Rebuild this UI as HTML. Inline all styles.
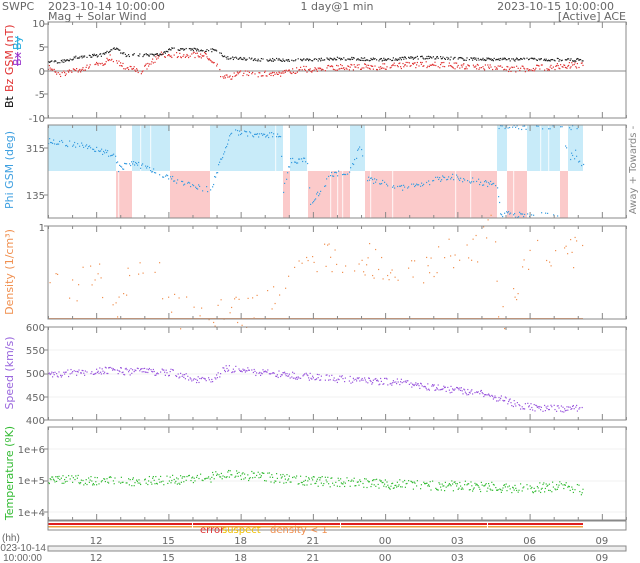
<!DOCTYPE html>
<html><head><meta charset="utf-8"><style>
html,body{margin:0;padding:0;background:#fff;width:640px;height:563px;overflow:hidden}
svg{display:block;font-family:"DejaVu Sans","Liberation Sans",sans-serif}
</style></head><body>
<svg id="s" width="640" height="563" xmlns="http://www.w3.org/2000/svg">
<g font-size="11" fill="#666">
<text x="2" y="10">SWPC</text>
<text x="48" y="10">2023-10-14 10:00:00</text>
<text x="337" y="10" text-anchor="middle">1 day@1 min</text>
<text x="614" y="10" text-anchor="end">2023-10-15 10:00:00</text>
<text x="48" y="20">Mag + Solar Wind</text>
<text x="626" y="20" text-anchor="end">[Active] ACE</text>
</g>
<g id="bg"></g>
<g id="grid"></g>
<g id="pts"></g>
<g id="ax" fill="none" stroke="#888" stroke-width="1"></g>
<g font-size="10" fill="#666" text-anchor="end">
<text x="45" y="27">10</text><text x="45" y="51">5</text><text x="45" y="75">0</text><text x="45" y="98">-5</text><text x="45" y="122">-10</text>
<text x="45" y="152">315</text><text x="45" y="199">135</text>
<text x="45" y="231">1</text>
<text x="45" y="331">600</text><text x="45" y="354">550</text><text x="45" y="377">500</text><text x="45" y="401">450</text><text x="45" y="424">400</text>
<text x="45" y="453">1e+6</text><text x="45" y="484">1e+5</text><text x="45" y="516">1e+4</text>
</g>
<g font-size="11">
<text transform="translate(13,108) rotate(-90)" fill="#000">Bt</text>
<text transform="translate(13,92) rotate(-90)" fill="#e03030">Bz GSM (nT)</text>
<text transform="translate(21,66) rotate(-90)" fill="#9933cc" text-decoration="line-through">Bx</text>
<text transform="translate(21,50) rotate(-90)" fill="#22aadd" text-decoration="line-through">By</text>
<text transform="translate(13,170) rotate(-90)" text-anchor="middle" fill="#3fa0e0">Phi GSM (deg)</text>
<text transform="translate(13,272) rotate(-90)" text-anchor="middle" fill="#f09050">Density (1/cm³)</text>
<text transform="translate(13,373) rotate(-90)" text-anchor="middle" fill="#9966dd">Speed (km/s)</text>
<text transform="translate(13,473) rotate(-90)" text-anchor="middle" fill="#33bb33">Temperature (ºK)</text>
<text transform="translate(636,170) rotate(-90)" text-anchor="middle" fill="#888" font-size="10">Away +  Towards -</text>
</g>
<g font-size="10">
<text x="200" y="533" fill="#e03030">error</text><text x="222" y="533" fill="#f0c000">suspect</text><text x="270" y="533" fill="#f09050">density &lt; 1</text>
</g>
<g font-size="10" fill="#666" text-anchor="middle" id="lbl"></g>
<g font-size="10" fill="#666" font-family="Liberation Sans, sans-serif">
<text x="2" y="541">(hh)</text>
<text x="46" y="551" text-anchor="end">2023-10-14</text>
<text x="42" y="561" text-anchor="end">10:00:00</text>
</g>
</svg>
<script>
var S=document.getElementById('s'),NS='http://www.w3.org/2000/svg';
function el(p,t,a){var e=document.createElementNS(NS,t);for(var k in a)e.setAttribute(k,a[k]);p.appendChild(e);return e;}
var X0=48,X1=626,H=24.08;
var seed=7;function r(){seed=(seed*16807)%2147483647;return seed/2147483647;}
function interp(c,x){for(var i=0;i<c.length-1;i++){if(x>=c[i][0]&&x<=c[i+1][0]){var t=(x-c[i][0])/(c[i+1][0]-c[i][0]);return c[i][1]+t*(c[i+1][1]-c[i][1]);}}return c[c.length-1][1];}
var bg=document.getElementById('bg'),ax=document.getElementById('ax'),pts=document.getElementById('pts'),grid=document.getElementById('grid'),lbl=document.getElementById('lbl');
var blue=[[48,116],[132,170],[210,283],[290,307],[350,365],[497,507],[527,560],[568,583]];
var pink=[[116,132],[170,210],[283,290],[308,350],[365,497],[507,527],[560,568]];
blue.forEach(function(b){el(bg,'rect',{x:b[0],y:125,width:b[1]-b[0],height:46,fill:'#c8ebf9'});});
pink.forEach(function(b){el(bg,'rect',{x:b[0],y:171,width:b[1]-b[0],height:47,fill:'#fbcaca'});});
[118,140,150,275,330,337,342,370,392,455,470,513,540,548].forEach(function(x){el(bg,'rect',{x:x,y:125,width:1.2,height:93,fill:'#fff',opacity:0.7});});
var P=[[22,118],[125,218],[226,319],[327,420],[427,520]];
el(grid,'line',{x1:48,x2:626,y1:71,y2:71,stroke:'#888'});
[350,374,397].forEach(function(y){el(grid,'line',{x1:48,x2:626,y1:y,y2:y,stroke:'#f0f0f0'});});
[449,481,512].forEach(function(y){el(grid,'line',{x1:48,x2:626,y1:y,y2:y,stroke:'#f0f0f0'});});
P.forEach(function(p){el(ax,'rect',{x:48,y:p[0],width:578,height:p[1]-p[0]});
 for(var h=0;h<=24;h++){var x=X0+h*H+0.5;var L=((h+1)%3==0)?6:3;
  el(ax,'line',{x1:x,x2:x,y1:p[0],y2:p[0]+L});el(ax,'line',{x1:x,x2:x,y1:p[1],y2:p[1]-L});}
});
[[24,47,71,94,118],[148,195],[226],[327,350,374,397,420],[449,481,512]].forEach(function(a){a.forEach(function(y){el(ax,'line',{x1:44,x2:48,y1:y,y2:y});});});
el(ax,'rect',{x:48,y:521,width:578,height:9});
el(pts,'rect',{x:48,y:523,width:535,height:2,fill:'#e02020'});
el(pts,'rect',{x:48,y:526,width:535,height:1.5,fill:'#f0a040'});
[192,340,487].forEach(function(x){el(pts,'rect',{x:x,y:521,width:1,height:9,fill:'#fff'});});
el(ax,'rect',{x:48,y:546,width:578,height:5,fill:'#eee'});
el(pts,'rect',{x:48,y:548,width:535,height:1.3,fill:'#a03020'});
var hl=['12','15','18','21','00','03','06','09'];
hl.forEach(function(l,i){var x=X0+(2+3*i)*H;el(lbl,'text',{x:x,y:544}).textContent=l;el(lbl,'text',{x:x,y:561}).textContent=l;});
function scat(c,col,sp,step,prob,sz){var a=c[0][0],b=c[c.length-1][0];for(var x=a;x<=b;x+=step){if(prob&&r()>prob)continue;var y=interp(c,x)+(r()-0.5)*sp;el(pts,'rect',{x:x,y:y,width:sz||1.2,height:sz||1.2,fill:col});}}
var bt=[[48,2.3],[60,2],[75,3],[100,3.5],[115,5],[125,3.5],[160,3.5],[170,4.8],[215,4.5],[225,3],[260,2.5],[320,2.5],[340,2.8],[380,2.5],[420,3],[480,2.6],[583,2.5]].map(function(p){return [p[0],71-p[1]*4.7];});
var bz=[[48,1],[60,-0.5],[80,0.5],[100,1.5],[110,3],[125,1],[140,0],[160,3.5],[170,3.5],[205,3.5],[215,2],[222,-1.5],[240,-0.5],[280,-0.5],[300,0.5],[320,0.5],[340,1],[380,1],[420,1.5],[480,1],[520,0.5],[583,1.5]].map(function(p){return [p[0],71-p[1]*4.7];});
scat(bz,'#e03030',6,0.8,0.8,1.2);
scat(bt,'#222',3,0.8,0.8,1.2);
var ph=[[48,140],[80,145],[115,155],[118,168],[132,162],[170,178],[210,190],[230,132],[280,135],[283,190],[290,160],[307,160],[310,205],[330,175],[350,170],[360,145],[365,178],[400,188],[450,176],[497,185],[500,214],[525,214]];
scat(ph,'#3b9ee0',6,1,0.7,1.2);
scat([[497,127],[583,127]],'#3b9ee0',4,1.5,0.5,1.2);
scat([[525,214],[560,214]],'#3b9ee0',4,2,0.4,1.2);
scat([[565,150],[583,160]],'#3b9ee0',14,1,0.6,1.2);
var dn=[[48,300],[60,285],[100,280],[118,300],[125,280],[140,265],[160,280],[170,300],[180,312],[260,312],[275,295],[300,270],[320,255],[360,255],[380,265],[410,275],[440,255],[470,250],[495,228],[498,312],[508,312],[515,285],[530,260],[545,240],[560,270],[575,250],[583,240]];
scat(dn,'#f09050',36,1.5,0.45,1.2);
el(pts,'rect',{x:48,y:318,width:535,height:1.2,fill:'#f0a070'});
var spd=[[48,374],[100,370],[170,372],[200,380],[215,378],[225,368],[260,372],[330,378],[400,382],[440,388],[480,393],[500,398],[520,405],[540,408],[583,408]];
scat(spd,'#9955dd',7,0.8,0.8,1.2);
var tp=[[48,478],[120,481],[200,478],[230,474],[300,480],[400,484],[480,486],[520,488],[560,486],[583,490]];
scat(tp,'#33bb33',10,0.8,0.8,1.2);
</script>
</body></html>
